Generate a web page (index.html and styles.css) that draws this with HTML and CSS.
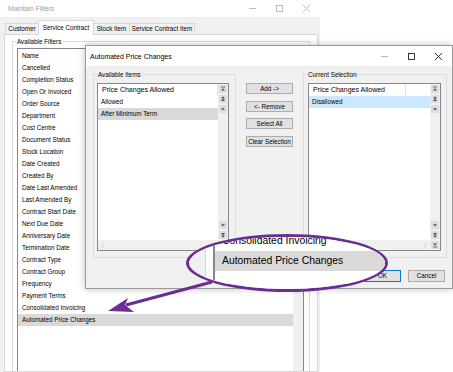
FILE: index.html
```html
<!DOCTYPE html>
<html lang="en">
<head>
    <meta charset="UTF-8">
    <meta name="viewport" content="width=device-width, initial-scale=1.0">
    <title>Maintain Filters</title>
    <link rel="stylesheet" href="styles.css">
</head>
<body>
    <div class="window">
        <div class="titlebar">
            <span class="title">Maintain Filters</span>
            <div class="ctrls inactive">
                <span class="ctrl"><svg viewBox="0 0 7 7"><line x1="0" y1="3.5" x2="7" y2="3.5"/></svg></span>
                <span class="ctrl"><svg viewBox="0 0 7 7"><rect x="0.5" y="0.5" width="6" height="6"/></svg></span>
                <span class="ctrl"><svg viewBox="0 0 7 7"><path d="M0 0 L7 7 M7 0 L0 7"/></svg></span>
            </div>
        </div>
        <div class="tabs">
            <div class="tab" style="width: 34px;">Customer</div>
            <div class="tab active" style="width: 56px;">Service Contract</div>
            <div class="tab" style="width: 37px;">Stock Item</div>
            <div class="tab" style="width: 66px;">Service Contract Item</div>
        </div>
        <div class="tabpage">
            <div class="group filters-group">
                <span class="group-label">Available Filters</span>
                <div class="filterlist">
                    <div class="filterrows">
                        <div>Name</div>
                        <div>Cancelled</div>
                        <div>Completion Status</div>
                        <div>Open Or Invoiced</div>
                        <div>Order Source</div>
                        <div>Department</div>
                        <div>Cost Centre</div>
                        <div>Document Status</div>
                        <div>Stock Location</div>
                        <div>Date Created</div>
                        <div>Created By</div>
                        <div>Date Last Amended</div>
                        <div>Last Amended By</div>
                        <div>Contract Start Date</div>
                        <div>Next Due Date</div>
                        <div>Anniversary Date</div>
                        <div>Termination Date</div>
                        <div>Contract Type</div>
                        <div>Contract Group</div>
                        <div>Frequency</div>
                        <div>Payment Terms</div>
                        <div>Consolidated Invoicing</div>
                        <div class="sel">Automated Price Changes</div>
                    </div>
                    <div class="vtrack"></div>
                </div>
            </div>
        </div>
    </div>

    <div class="dialog">
        <div class="dlg-titlebar">
            <span class="dlg-title">Automated Price Changes</span>
            <div class="ctrls">
                <span class="ctrl disabled"><svg viewBox="0 0 7 7"><line x1="0" y1="3.5" x2="7" y2="3.5"/></svg></span>
                <span class="ctrl"><svg viewBox="0 0 7 7"><rect x="0.5" y="0.5" width="6" height="6"/></svg></span>
                <span class="ctrl"><svg viewBox="0 0 7 7"><path d="M0 0 L7 7 M7 0 L0 7"/></svg></span>
            </div>
        </div>
        <div class="dlg-body">
            <div class="dlg-main">
                <div class="group left">
                    <span class="group-label">Available Items</span>
                    <div class="item-list">
                        <div class="rows">
                            <div class="head"><span class="col-head">Price Changes Allowed</span></div>
                            <div class="item">Allowed</div>
                            <div class="item sel">After Minimum Term</div>
                        </div>
                        <div class="vscroll">
                            <div class="sb-group">
                                <span class="sb"><svg viewBox="0 0 10 10"><rect x="2.5" y="2" width="5" height="1"/><path d="M5 4 L7.5 7 H2.5Z"/></svg></span>
                                <span class="sb"><svg viewBox="0 0 10 10"><path d="M5 1.5 L7.5 4.5 H2.5Z M5 4.5 L7.5 7.5 H2.5Z"/></svg></span>
                                <span class="sb"><svg viewBox="0 0 10 10"><path d="M5 3 L7.5 6 H2.5Z"/></svg></span>
                            </div>
                            <div class="sb-group">
                                <span class="sb"><svg viewBox="0 0 10 10"><path d="M5 7 L7.5 4 H2.5Z"/></svg></span>
                                <span class="sb"><svg viewBox="0 0 10 10"><path d="M5 8.5 L7.5 5.5 H2.5Z M5 5.5 L7.5 2.5 H2.5Z"/></svg></span>
                                <span class="sb"><svg viewBox="0 0 10 10"><path d="M5 6 L7.5 3 H2.5Z"/><rect x="2.5" y="7" width="5" height="1"/></svg></span>
                            </div>
                        </div>
                        <div class="hscroll">
                            <svg viewBox="0 0 4 6"><path d="M3 0.5 L1 3 L3 5.5"/></svg>
                            <svg viewBox="0 0 4 6"><path d="M1 0.5 L3 3 L1 5.5"/></svg>
                        </div>
                    </div>
                </div>

                <div class="mid">
                    <button class="btn">Add -&gt;</button>
                    <button class="btn">&lt;- Remove</button>
                    <button class="btn">Select All</button>
                    <button class="btn">Clear Selection</button>
                </div>

                <div class="group right">
                    <span class="group-label">Current Selection</span>
                    <div class="item-list">
                        <div class="rows">
                            <div class="head"><span class="col-head">Price Changes Allowed</span></div>
                            <div class="item picked">Disallowed</div>
                        </div>
                        <div class="vscroll">
                            <div class="sb-group">
                                <span class="sb"><svg viewBox="0 0 10 10"><rect x="2.5" y="2" width="5" height="1"/><path d="M5 4 L7.5 7 H2.5Z"/></svg></span>
                                <span class="sb"><svg viewBox="0 0 10 10"><path d="M5 1.5 L7.5 4.5 H2.5Z M5 4.5 L7.5 7.5 H2.5Z"/></svg></span>
                                <span class="sb"><svg viewBox="0 0 10 10"><path d="M5 3 L7.5 6 H2.5Z"/></svg></span>
                            </div>
                            <div class="sb-group">
                                <span class="sb"><svg viewBox="0 0 10 10"><path d="M5 7 L7.5 4 H2.5Z"/></svg></span>
                                <span class="sb"><svg viewBox="0 0 10 10"><path d="M5 8.5 L7.5 5.5 H2.5Z M5 5.5 L7.5 2.5 H2.5Z"/></svg></span>
                                <span class="sb"><svg viewBox="0 0 10 10"><path d="M5 6 L7.5 3 H2.5Z"/><rect x="2.5" y="7" width="5" height="1"/></svg></span>
                            </div>
                        </div>
                        <div class="hscroll">
                            <svg viewBox="0 0 4 6"><path d="M3 0.5 L1 3 L3 5.5"/></svg>
                            <svg viewBox="0 0 4 6"><path d="M1 0.5 L3 3 L1 5.5"/></svg>
                        </div>
                    </div>
                </div>
            </div>
            <div class="dlg-foot">
                <button class="btn wide default">OK</button>
                <button class="btn wide">Cancel</button>
            </div>
        </div>
    </div>

    <!-- callout pointing at the new filter -->
    <svg class="arrow" width="453" height="372" viewBox="0 0 453 372">
        <line x1="212" y1="282" x2="126" y2="305" stroke="#6b2d90" stroke-width="3"/>
        <polygon points="108,311 128,298 125,305 134,312" fill="#6b2d90"/>
    </svg>
    <div class="callout">
        <div class="zoom-edge"></div>
        <div class="zoom-gap"></div>
        <div class="zoom-list">
            <div class="zoom-row">Consolidated Invoicing</div>
            <div class="zoom-row sel">Automated Price Changes</div>
        </div>
    </div>
</body>
</html>
```

FILE: styles.css
```css
* {
    box-sizing: border-box;
}
body {
    margin: 0;
    width: 453px;
    height: 372px;
    overflow: hidden;
    position: relative;
    background-color: #fff;
    font-family: "Liberation Sans", Arial, sans-serif;
    font-size: 6.3px;
    color: #000;
}
.window {
    width: 320px;
    height: 372px;
    background-color: #f0f0f0;
    display: flex;
    flex-direction: column;
}
.titlebar {
    height: 17px;
    flex-shrink: 0;
    background-color: #fff;
    display: flex;
    align-items: center;
}
.title {
    flex: 1;
    padding-left: 8px;
    font-size: 6.8px;
    color: #9a9a9a;
}
.ctrls {
    display: flex;
    align-self: stretch;
}
.ctrl {
    width: 27px;
    display: flex;
    align-items: center;
    justify-content: center;
}
.ctrl svg {
    width: 7px;
    height: 7px;
    fill: none;
    stroke: #222;
    stroke-width: 0.9;
}
.ctrls.inactive svg,
.ctrl.disabled svg {
    stroke: #b4b4b4;
}
.tabs {
    height: 17px;
    flex-shrink: 0;
    display: flex;
    align-items: flex-end;
    padding-left: 5px;
}
.tab {
    height: 11px;
    line-height: 10px;
    text-align: center;
    white-space: nowrap;
    border: 1px solid #d9d9d9;
    border-bottom: none;
    margin-right: -1px;
    background-color: #f0f0f0;
}
.tab.active {
    height: 15px;
    line-height: 13px;
    margin-bottom: -1px;
    background-color: #fff;
    position: relative;
    z-index: 1;
}
.tabpage {
    flex: 1;
    width: 314px;
    margin-left: 4px;
    border: 1px solid #d9d9d9;
    background-color: #fff;
    padding: 6px 0 0 7px;
    overflow: hidden;
}
.group {
    position: relative;
    border: 1px solid #dcdcdc;
}
.group-label {
    position: absolute;
    top: -4px;
    left: 3px;
    padding: 0 1px;
    line-height: 7px;
    white-space: nowrap;
    background-color: #f0f0f0;
}
.filters-group {
    width: 298px;
    height: 340px;
}
.filters-group .group-label {
    background-color: #fff;
}
.filterlist {
    margin: 6px 0 0 4px;
    width: 287px;
    height: 330px;
    border: 1px solid #828790;
    background-color: #fff;
    display: flex;
}
.filterrows {
    flex: 1;
    padding-top: 1px;
}
.filterrows div {
    height: 12px;
    line-height: 12px;
    padding-left: 4px;
    white-space: nowrap;
}
.sel {
    background-color: #d9d9d9;
}
.vtrack {
    width: 10px;
    background-color: #f0f0f0;
}

/* dialog */
.dialog {
    position: absolute;
    left: 85px;
    top: 45px;
    width: 368px;
    height: 244px;
    border: 1px solid #9a9a9a;
    background-color: #f0f0f0;
    box-shadow: 0 0 7px rgba(0, 0, 0, 0.25);
    display: flex;
    flex-direction: column;
}
.dlg-titlebar {
    height: 20px;
    flex-shrink: 0;
    background-color: #fff;
    display: flex;
    align-items: center;
}
.dlg-title {
    flex: 1;
    padding-left: 4px;
    font-size: 7px;
}
.dlg-body {
    flex: 1;
    padding: 8px 5px 0 7px;
}
.dlg-main {
    display: grid;
    grid-template-columns: 143px 47px 144px;
    column-gap: 10px;
    height: 184px;
}
.item-list {
    margin-top: 8px;
    height: 168px;
    border: 1px solid #828790;
    background-color: #fff;
    display: grid;
    grid-template-columns: 1fr 10px;
    grid-template-rows: 1fr 10px;
}
.left .item-list {
    margin-left: 3px;
    width: 132px;
}
.right .item-list {
    margin-left: 4px;
    width: 133px;
}
.rows {
    grid-column: 1;
    grid-row: 1;
}
.head {
    height: 12px;
    display: flex;
}
.col-head {
    line-height: 12px;
    padding-left: 4px;
    font-size: 7px;
    white-space: nowrap;
    border-right: 1px solid #e3e3e3;
}
.left .col-head {
    width: 120px;
}
.right .col-head {
    width: 97px;
}
.item {
    height: 12px;
    line-height: 12px;
    padding-left: 3px;
    white-space: nowrap;
}
.item.picked {
    background-color: #cce8ff;
}
.vscroll {
    grid-column: 2;
    grid-row: 1 / 3;
    background-color: #f0f0f0;
    display: flex;
    flex-direction: column;
    justify-content: space-between;
}
.sb {
    display: block;
    width: 10px;
    height: 10px;
    background-color: #dedede;
    border: 1px solid #f0f0f0;
}
.sb svg {
    display: block;
    width: 8px;
    height: 8px;
    fill: #555;
}
.hscroll {
    grid-column: 1;
    grid-row: 2;
    background-color: #f0f0f0;
    display: flex;
    align-items: center;
    justify-content: space-between;
    padding: 0 3px;
}
.hscroll svg {
    width: 3px;
    height: 5px;
    fill: none;
    stroke: #a6a6a6;
    stroke-width: 0.8;
}
.mid {
    padding-top: 9px;
    display: flex;
    flex-direction: column;
    gap: 6.67px;
}
.btn {
    height: 11px;
    padding: 0;
    font: inherit;
    line-height: 9px;
    color: #000;
    text-align: center;
    white-space: nowrap;
    background-color: #e1e1e1;
    border: 1px solid #adadad;
}
.dlg-foot {
    margin-top: 12px;
    padding-right: 2px;
    display: flex;
    justify-content: flex-end;
    gap: 7px;
}
.btn.wide {
    width: 37px;
    height: 12px;
    line-height: 10px;
}
.btn.default {
    border-color: #0078d7;
}

/* magnified callout */
.arrow {
    position: absolute;
    left: 0;
    top: 0;
    pointer-events: none;
}
.callout {
    position: absolute;
    left: 186px;
    top: 234px;
    width: 202px;
    height: 58px;
    border: 3px solid #6b2d90;
    border-radius: 50%;
    overflow: hidden;
    background-color: #f0f0f0;
    display: flex;
}
.zoom-edge {
    width: 17px;
    border-right: 1px solid #d6d6d6;
}
.zoom-gap {
    width: 7px;
    background-color: #fbfbfb;
}
.zoom-list {
    flex: 1;
    background-color: #fff;
    border-left: 2px solid #828790;
}
.zoom-row {
    height: 20px;
    line-height: 20px;
    padding-left: 7px;
    font-size: 10.4px;
    white-space: nowrap;
}
.zoom-row:first-child {
    margin-top: -6px;
}
```
